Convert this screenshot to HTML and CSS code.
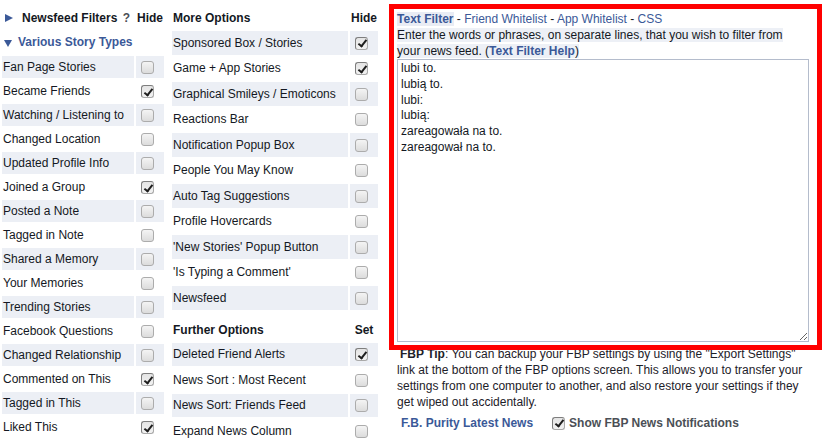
FILE: index.html
```html
<!DOCTYPE html>
<html lang="en">
<head>
<meta charset="utf-8">
<title>F.B. Purity Options</title>
<link rel="stylesheet" href="styles.css">
</head>
<body>
<div class="page">
  <table class="opts left">
    <tr class="head">
      <td class="lbl"><div class="hrow"><span class="htitle"><svg class="tri" width="8" height="8" viewBox="0 0 8 8"><polygon points="0,0 8,4 0,8" fill="#3b5998"/></svg>Newsfeed Filters</span><span class="q">?</span></div></td>
      <td class="chk hd">Hide</td>
    </tr>
    <tr class="title">
      <td colspan="2"><svg class="tri-d" width="8" height="7" viewBox="0 0 8 7"><polygon points="0,0 8,0 4,7" fill="#3b5998"/></svg>Various Story Types</td>
    </tr>
    <tr class="alt"><td class="lbl">Fan Page Stories</td><td class="chk"><span class="cb"></span></td></tr>
    <tr><td class="lbl">Became Friends</td><td class="chk"><span class="cb on"></span></td></tr>
    <tr class="alt"><td class="lbl">Watching / Listening to</td><td class="chk"><span class="cb"></span></td></tr>
    <tr><td class="lbl">Changed Location</td><td class="chk"><span class="cb"></span></td></tr>
    <tr class="alt"><td class="lbl">Updated Profile Info</td><td class="chk"><span class="cb"></span></td></tr>
    <tr><td class="lbl">Joined a Group</td><td class="chk"><span class="cb on"></span></td></tr>
    <tr class="alt"><td class="lbl">Posted a Note</td><td class="chk"><span class="cb"></span></td></tr>
    <tr><td class="lbl">Tagged in Note</td><td class="chk"><span class="cb"></span></td></tr>
    <tr class="alt"><td class="lbl">Shared a Memory</td><td class="chk"><span class="cb"></span></td></tr>
    <tr><td class="lbl">Your Memories</td><td class="chk"><span class="cb"></span></td></tr>
    <tr class="alt"><td class="lbl">Trending Stories</td><td class="chk"><span class="cb"></span></td></tr>
    <tr><td class="lbl">Facebook Questions</td><td class="chk"><span class="cb"></span></td></tr>
    <tr class="alt"><td class="lbl">Changed Relationship</td><td class="chk"><span class="cb"></span></td></tr>
    <tr><td class="lbl">Commented on This</td><td class="chk"><span class="cb on"></span></td></tr>
    <tr class="alt"><td class="lbl">Tagged in This</td><td class="chk"><span class="cb"></span></td></tr>
    <tr><td class="lbl">Liked This</td><td class="chk"><span class="cb on"></span></td></tr>
  </table>

  <div class="mid">
    <table class="opts wide">
      <tr class="head"><td class="lbl hd-l">More Options</td><td class="chk hd">Hide</td></tr>
      <tr class="alt"><td class="lbl">Sponsored Box / Stories</td><td class="chk"><span class="cb on"></span></td></tr>
      <tr><td class="lbl">Game + App Stories</td><td class="chk"><span class="cb on"></span></td></tr>
      <tr class="alt"><td class="lbl">Graphical Smileys / Emoticons</td><td class="chk"><span class="cb"></span></td></tr>
      <tr><td class="lbl">Reactions Bar</td><td class="chk"><span class="cb"></span></td></tr>
      <tr class="alt"><td class="lbl">Notification Popup Box</td><td class="chk"><span class="cb"></span></td></tr>
      <tr><td class="lbl">People You May Know</td><td class="chk"><span class="cb"></span></td></tr>
      <tr class="alt"><td class="lbl">Auto Tag Suggestions</td><td class="chk"><span class="cb"></span></td></tr>
      <tr><td class="lbl">Profile Hovercards</td><td class="chk"><span class="cb"></span></td></tr>
      <tr class="alt"><td class="lbl">'New Stories' Popup Button</td><td class="chk"><span class="cb"></span></td></tr>
      <tr><td class="lbl">'Is Typing a Comment'</td><td class="chk"><span class="cb"></span></td></tr>
      <tr class="alt"><td class="lbl">Newsfeed</td><td class="chk"><span class="cb"></span></td></tr>
    </table>
    <table class="opts wide further">
      <tr class="head"><td class="lbl hd-l">Further Options</td><td class="chk hd">Set</td></tr>
      <tr class="alt"><td class="lbl">Deleted Friend Alerts</td><td class="chk"><span class="cb on"></span></td></tr>
      <tr><td class="lbl">News Sort : Most Recent</td><td class="chk"><span class="cb"></span></td></tr>
      <tr class="alt"><td class="lbl">News Sort: Friends Feed</td><td class="chk"><span class="cb"></span></td></tr>
      <tr><td class="lbl">Expand News Column</td><td class="chk"><span class="cb"></span></td></tr>
      <tr class="alt"><td class="lbl"></td><td class="chk"></td></tr>
    </table>
  </div>

  <div class="right">
    <div class="filter-box">
      <div class="tabs"><span class="tab-active">Text Filter</span> - <span class="link">Friend Whitelist</span> - <span class="link">App Whitelist</span> - <span class="link">CSS</span></div>
      <p class="desc"><span class="desc-bg">Enter the words or phrases, on separate lines, that you wish to filter from your news feed. (<b class="link">Text Filter Help</b>)</span></p>
      <textarea class="filter-text" spellcheck="false">lubi to.
lubią to.
lubi:
lubią:
zareagowała na to.
zareagował na to.</textarea>
    </div>
    <p class="tip"><b>FBP Tip</b>: You can backup your FBP settings by using the "Export Settings" link at the bottom of the FBP options screen. This allows you to transfer your settings from one computer to another, and also restore your settings if they get wiped out accidentally.</p>
    <div class="news">
      <span class="news-title">F.B. Purity Latest News</span>
      <span class="cb on"></span>
      <span class="news-opt">Show FBP News Notifications</span>
    </div>
  </div>
</div>
</body>
</html>
```

FILE: styles.css
```css
html, body {
  margin: 0;
  padding: 0;
  overflow: hidden;
  background: #ffffff;
}

body {
  font-family: "Liberation Sans", Arial, sans-serif;
  font-size: 12px;
  color: #141823;
}

.page {
  display: flex;
  align-items: flex-start;
  padding-top: 5px;
}

/* option tables */
.opts {
  border-collapse: separate;
  border-spacing: 2px;
}

.opts td {
  padding: 0 1px;
  height: 22px;
  line-height: 14px;
  vertical-align: middle;
  white-space: nowrap;
}

.left .lbl { width: 130px; }
.wide .lbl { width: 174px; }
.chk { width: 26px; }

.opts tr.alt td { background: #eceff5; }

.hd {
  font-weight: bold;
  text-align: center;
}

.hd-l { font-weight: bold; }

.hrow {
  display: flex;
  justify-content: space-between;
  align-items: center;
  padding: 0 3px 0 2px;
  font-weight: bold;
}

.htitle {
  display: flex;
  align-items: center;
}

.tri { margin-right: 9px; }

.q { color: #4b4f56; }

.opts .title td {
  height: 22px;
  padding-bottom: 1px;
  font-weight: bold;
  color: #3b5998;
}

.tri-d {
  margin: 0 6px 0 1px;
  vertical-align: -1px;
}

.mid {
  margin-left: 4px;
}

.wide tr:not(.head) td { height: 23.5px; }

.further { margin-top: 5px; }

/* checkbox */
.cb {
  display: inline-block;
  box-sizing: border-box;
  width: 13px;
  height: 13px;
  margin-left: 4px;
  border: 1px solid #acacac;
  border-radius: 3px;
  background: linear-gradient(#f4f4f4, #dcdcdc);
  vertical-align: middle;
  position: relative;
}

.cb.on {
  border-color: #7e7e7e #a9a9a9 #a9a9a9 #7e7e7e;
  background: linear-gradient(#e4e4e4, #f2f2f2);
}

.cb.on::after {
  content: "";
  position: absolute;
  left: 3.5px;
  top: 0.5px;
  width: 3px;
  height: 7px;
  border: solid #1e1e1e;
  border-width: 0 2px 2px 0;
  transform: rotate(38deg);
}

/* right panel */
.right {
  margin-left: 9px;
  margin-top: -1px;
  width: 433px;
}

.filter-box {
  position: relative;
  z-index: 1;
  border: 5px solid #ff0000;
  padding: 2px 8px 3px 3px;
}

.tabs {
  line-height: 16px;
  color: #141823;
}

.tab-active {
  font-weight: bold;
  color: #3b5998;
  background: #e9ecf4;
}

.link { color: #3b5998; }

.desc {
  margin: 0;
  line-height: 16px;
}

.desc-bg { background: #edf0f6; }

.filter-text {
  display: block;
  box-sizing: border-box;
  width: 100%;
  height: 283px;
  margin: 0;
  padding: 1px 3px;
  border: 1px solid #b4bccc;
  font-family: "Liberation Sans", Arial, sans-serif;
  font-size: 12px;
  line-height: 15.8px;
  color: #141823;
  background: #ffffff;
  resize: both;
  outline: none;
}

.tip {
  margin: -4px 10px 0 8px;
  line-height: 16px;
  text-indent: 3px;
  color: #1d2129;
}

.news {
  display: flex;
  align-items: center;
  height: 16px;
  margin: 5px 0 0 12px;
  font-weight: bold;
}

.news-title { color: #3b5998; }

.news .cb { margin-left: 19px; }

.news-opt {
  margin-left: 4px;
  color: #4b4f56;
}
```
